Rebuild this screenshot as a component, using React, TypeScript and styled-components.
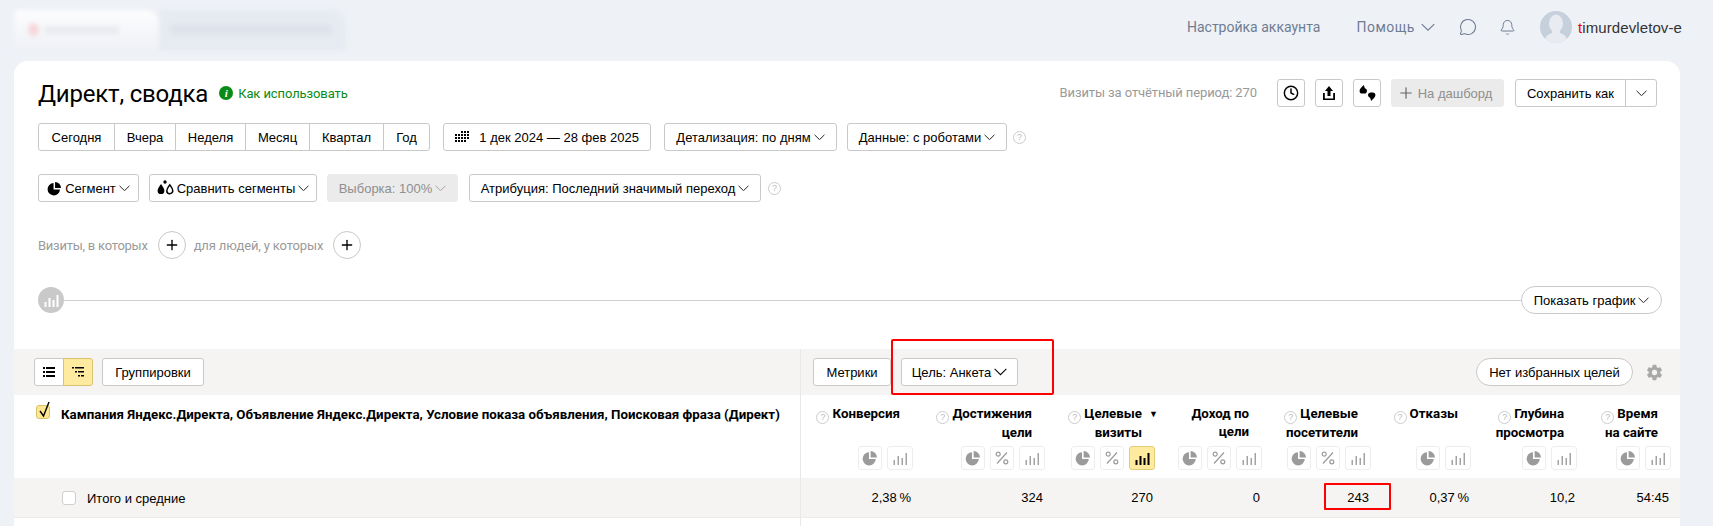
import React from 'react'
import styled, { createGlobalStyle } from 'styled-components'
import { Bell, Clock, MessageCircle, Plus } from 'lucide-react'
import { IoSettingsSharp } from 'react-icons/io5'

const GlobalStyle = createGlobalStyle`
  html, body {
    margin: 0;
    padding: 0;
    background: #eef1f6;
  }
  * {
    box-sizing: border-box;
  }
`

const Page = styled.div`
  width: 1713px;
  height: 526px;
  overflow: hidden;
  background: #eef1f6;
  font-family: 'Liberation Sans', Arial, sans-serif;
  font-size: 13px;
  color: #000;
  display: flex;
  flex-direction: column;
`

const TopBar = styled.header`
  height: 61px;
  flex: none;
  display: flex;
  align-items: center;
  padding: 0 31px 7px 14px;
`

const BlurredBrand = styled.div`
  display: flex;
  width: 331px;
  height: 40px;
  margin-top: 5px;
  filter: blur(2.5px);
`

const BlurredLogo = styled.div`
  width: 145px;
  border-radius: 4px 14px 0 0;
  background: linear-gradient(#fdfdfe, #eff1f6);
  display: flex;
  align-items: center;
  gap: 6px;
  padding-left: 14px;
`

const BlurredDot = styled.span`
  width: 11px;
  height: 13px;
  border-radius: 50%;
  background: #f6d5d7;
`

const BlurredWord = styled.span`
  width: 74px;
  height: 8px;
  background: #e9eaef;
`

const BlurredCrumbs = styled.div`
  flex: 1;
  background: #e6eaf1;
  border-radius: 0 14px 0 0;
  display: flex;
  align-items: center;
  padding-left: 12px;
`

const BlurredLine = styled.span`
  width: 160px;
  height: 9px;
  background: #dce2eb;
`

const NavLinks = styled.nav`
  margin-left: auto;
  display: flex;
  align-items: center;
  color: #6f7d92;
  font-size: 14px;
  font-family: Roboto, sans-serif;
`

const NavLink = styled.span`
  margin-right: 36px;
`

const NavHelp = styled.span`
  display: flex;
  align-items: center;
  gap: 6px;
  margin-right: 24px;
  letter-spacing: 0.5px;
`

const NavIcon = styled.span<{ $gap: number }>`
  display: flex;
  margin-right: ${(p) => p.$gap}px;
`

const Avatar = styled.span`
  width: 32px;
  height: 32px;
  border-radius: 50%;
  overflow: hidden;
  background: #c6cfdc;
  margin-right: 6px;
  display: flex;
`

const UserName = styled.span`
  color: #333;
  font-family: 'Liberation Sans', Arial, sans-serif;
  font-size: 15px;
  letter-spacing: 0.1px;
`

const RedLetter = styled.span`
  color: #e00;
`

const Card = styled.main`
  flex: 1;
  margin: 0 33px 0 14px;
  background: #fff;
  border-radius: 14px 14px 0 0;
  display: flex;
  flex-direction: column;
  min-height: 0;
`

const TitleRow = styled.div`
  display: flex;
  align-items: center;
  height: 28px;
  margin: 18px 23px 0 24px;
`

const Title = styled.h1`
  margin: 0 11px 0 0;
  padding-top: 3px;
  font-family: Roboto, sans-serif;
  font-weight: 400;
  font-size: 24px;
  letter-spacing: -0.2px;
  line-height: 25px;
`

const HowTo = styled.a`
  display: flex;
  align-items: center;
  gap: 5px;
  color: #0a8a16;
  font-family: Roboto, sans-serif;
  font-size: 13px;
  letter-spacing: -0.1px;
`

const InfoDot = styled.span`
  width: 14px;
  height: 14px;
  border-radius: 50%;
  background: #0a8a16;
  color: #fff;
  font: italic bold 11px/14px 'Liberation Serif', serif;
  text-align: center;
`

const VisitsNote = styled.span`
  margin-left: auto;
  margin-right: 20px;
  padding-bottom: 2px;
  color: #999;
  font-family: Roboto, sans-serif;
  font-size: 13px;
  letter-spacing: -0.1px;
`

const ToolRow = styled.div<{ $top: number }>`
  display: flex;
  align-items: center;
  height: 28px;
  margin: ${(p) => p.$top}px 18px 0 24px;
`

const Button = styled.button<{ $w?: number; $gap?: number; $round?: boolean }>`
  height: 28px;
  ${(p) => (p.$w ? `width: ${p.$w}px;` : '')}
  flex: none;
  padding: 0;
  margin-right: ${(p) => p.$gap ?? 0}px;
  display: inline-flex;
  align-items: center;
  justify-content: center;
  gap: 3px;
  background: #fff;
  border: 1px solid #c9c9c9;
  border-radius: ${(p) => (p.$round ? '14px' : '3px')};
  color: #000;
  font: 13px 'Liberation Sans', Arial, sans-serif;
  white-space: nowrap;
`

const DisabledButton = styled(Button)`
  background: #ebebeb;
  border-color: #ebebeb;
  color: #8f8f8f;
`

const DashboardButton = styled(DisabledButton)`
  padding-right: 6px;
`

const GoalsButton = styled(Button)`
  margin-left: auto;
`

const Group = styled.div<{ $gap?: number }>`
  display: flex;
  margin-right: ${(p) => p.$gap ?? 0}px;
`

const GroupItem = styled(Button)<{ $on?: boolean }>`
  border-radius: 0;
  margin-left: -1px;
  background: ${(p) => (p.$on ? '#ffeba0' : '#fff')};
  border-color: ${(p) => (p.$on ? '#d9c26e' : '#c9c9c9')};
  &:first-child {
    margin-left: 0;
    border-radius: 3px 0 0 3px;
  }
  &:last-child {
    border-radius: 0 3px 3px 0;
  }
`

const HelpMark = styled.span`
  width: 13px;
  height: 13px;
  flex: none;
  border: 1px solid #ccc;
  border-radius: 50%;
  color: #bbb;
  font: 9px/11px 'Liberation Sans', sans-serif;
  text-align: center;
  display: inline-block;
`

const FilterLabel = styled.span<{ $spacing: number }>`
  color: #9a9a9a;
  font-family: Roboto, sans-serif;
  font-size: 13px;
  letter-spacing: ${(p) => p.$spacing}px;
  margin-right: 10px;
`

const AddCircle = styled.button`
  width: 28px;
  height: 28px;
  flex: none;
  padding: 0;
  margin-right: 8px;
  border: 1px solid #c9c9c9;
  border-radius: 50%;
  background: #fff;
  display: flex;
  align-items: center;
  justify-content: center;
`

const ChartRow = styled.div`
  display: flex;
  align-items: center;
  height: 28px;
  margin: 27px 18px 0 24px;
`

const ChartBadge = styled.span`
  width: 26px;
  height: 26px;
  border-radius: 50%;
  background: #c9c9c9;
  flex: none;
  display: flex;
  align-items: center;
  justify-content: center;
`

const ChartLine = styled.span`
  flex: 1;
  height: 1px;
  background: #cfcfcf;
`

const Table = styled.section`
  flex: 1;
  margin-top: 35px;
  display: flex;
  flex-direction: column;
  min-height: 0;
`

const TableRow = styled.div<{ $shade?: boolean; $h?: number }>`
  display: grid;
  grid-template-columns: 786px 1fr;
  background: ${(p) => (p.$shade ? '#f5f4f2' : '#fff')};
  ${(p) => (p.$h ? `height: ${p.$h}px; flex: none;` : 'flex: 1;')}
`

const TotalRow = styled(TableRow)`
  border-bottom: 1px solid #ebebeb;
`

const LeftCell = styled.div`
  display: flex;
  align-items: center;
`

const ToolbarLeft = styled(LeftCell)`
  padding-left: 20px;
`

const HeadLeft = styled(LeftCell)`
  align-items: flex-start;
  padding: 10px 0 0 22px;
`

const TotalLeft = styled(LeftCell)`
  padding: 1px 0 0 48px;
`

const RightCell = styled.div`
  border-left: 1px solid #e8e8e8;
  position: relative;
`

const ToolbarRight = styled(RightCell)`
  display: flex;
  align-items: center;
  padding: 0 17px 0 12px;
`

const GoalHighlight = styled.span`
  position: absolute;
  left: 90px;
  top: -10px;
  width: 163px;
  height: 56px;
  border: 2px solid #f00;
  border-radius: 2px;
  pointer-events: none;
`

const Settings = styled.span`
  display: flex;
  color: #a8a8a8;
  margin-left: 13px;
`

const MetricGrid = styled(RightCell)`
  display: grid;
  grid-template-columns: 112px 132px 110px 107px 109px 100px 106px 94px;
`

const Check = styled.span<{ $on?: boolean }>`
  width: 14px;
  height: 14px;
  flex: none;
  position: relative;
  border: 1px solid ${(p) => (p.$on ? '#d9c26e' : '#cfcfcf')};
  border-radius: 3px;
  background: ${(p) => (p.$on ? '#ffe78f' : '#fff')};
`

const CheckMark = styled.svg`
  position: absolute;
  left: 0;
  top: -6px;
`

const DimensionTitle = styled.span`
  margin: 1px 0 0 11px;
  font-family: Roboto, sans-serif;
  font-weight: 700;
  font-size: 13.3px;
  line-height: 17px;
  white-space: nowrap;
`

const TotalLabel = styled.span`
  margin-left: 11px;
`

const MetricHead = styled.div`
  display: flex;
  flex-direction: column;
  align-items: flex-end;
`

const MetricTitle = styled.div`
  height: 51px;
  padding: 10px 13px 0 0;
  position: relative;
  font-family: Roboto, sans-serif;
  font-weight: 700;
  font-size: 13.3px;
  line-height: 18px;
  text-align: right;
  white-space: nowrap;
  ${HelpMark} {
    margin-right: 3px;
    vertical-align: -2px;
    font-weight: 400;
  }
`

const SortArrow = styled.span`
  position: absolute;
  right: -3px;
  top: 10px;
  font-size: 9px;
  font-weight: 400;
`

const ChartButtons = styled.div`
  display: flex;
  gap: 5px;
`

const ChartButton = styled.span<{ $on?: boolean; $wide?: boolean }>`
  height: 24px;
  width: ${(p) => (p.$wide ? 26 : 24)}px;
  display: flex;
  align-items: center;
  justify-content: center;
  border: 1px solid ${(p) => (p.$on ? '#e3cc78' : '#ededed')};
  border-radius: 3px;
  background: ${(p) => (p.$on ? '#ffeba0' : '#fff')};
`

const ValueCell = styled.div`
  display: flex;
  align-items: center;
  justify-content: flex-end;
  padding-right: 2px;
`

const Value = styled.span<{ $marked?: boolean }>`
  position: relative;
  font-size: 13px;
  ${(p) =>
    p.$marked
      ? `&::after {
          content: '';
          position: absolute;
          left: -23px;
          right: -22px;
          top: -7px;
          bottom: -5px;
          border: 2px solid #f00;
          border-radius: 1px;
        }`
      : ''}
`

const Chevron = ({ w = 11, color = '#000' }: { w?: number; color?: string }) => (
  <svg width={w} height={w * 0.6} viewBox="0 0 12 7" fill="none" stroke={color} strokeWidth="0.95">
    <path d="M.6.8 6 6.100 11.400.8" />
  </svg>
)

const PieIcon = ({ color = '#9b9b9b', size = 16 }: { color?: string; size?: number }) => (
  <svg width={size} height={size} viewBox="0 0 16 16">
    <path d="M7 2.200A6.600 6.600 0 1 0 13.800 9H7z" fill={color} />
    <path d="M8.600 1a6.600 6.600 0 0 1 6.400 6.400H8.600z" fill={color} />
  </svg>
)

const BarsIcon = ({ color = '#a3a3a3', wide = false }: { color?: string; wide?: boolean }) => (
  <svg width="15" height="13" viewBox="0 0 15 13">
    <rect x="0.5" y="8" width={wide ? 2 : 1.5} height="5" fill={color} />
    <rect x="4.5" y="4" width={wide ? 2 : 1.5} height="9" fill={color} />
    <rect x="8.5" y="6" width={wide ? 2 : 1.5} height="7" fill={color} />
    <rect x="12.5" y="1" width={wide ? 2 : 1.5} height="12" fill={color} />
  </svg>
)

const PercentIcon = () => (
  <svg width="14" height="14" viewBox="0 0 14 14" fill="none" stroke="#9b9b9b" strokeWidth="1.2">
    <circle cx="3.200" cy="3.200" r="2" />
    <circle cx="10.800" cy="10.800" r="2" />
    <path d="M12 1.500 2 12.500" />
  </svg>
)

const CalendarIcon = () => (
  <svg width="14" height="13" viewBox="0 0 14 13" fill="#000">
    {[0, 3, 6, 9].map((y) =>
      [0, 3, 6, 9, 12].map((x) =>
        (y === 0 && x < 6) || (y === 9 && x > 9) ? null : (
          <rect key={`${x}-${y}`} x={x} y={y} width="2" height="2" />
        )
      )
    )}
  </svg>
)

const DropsIcon = () => (
  <svg width="17" height="16" viewBox="0 0 17 16">
    <circle cx="8" cy="2" r="1.700" fill="#000" />
    <path d="M4 4c2 3 3.400 4.700 3.400 6.700a3.400 3.400 0 0 1-6.800 0C.6 8.700 2 7 4 4z" fill="#000" />
    <path d="M12.800 4.800c1.700 2.500 3 4 3 5.900a3 3 0 0 1-6 0c0-1.900 1.300-3.400 3-5.900z" fill="#fff" stroke="#000" strokeWidth="1.500" />
  </svg>
)

const UploadIcon = () => (
  <svg width="14" height="16" viewBox="0 0 14 16" fill="#000">
    <path d="M7 1 11 6H8.500v5h-3V6H3z" />
    <path d="M1 8h1.800v5.400h8.400V8H13v7H1z" />
  </svg>
)

const blob = 'M4.500 1 5.500 4C7 4.300 7.500 5.500 7.500 6.500 7.500 8 6.300 9 5 9H3C1.500 9 .5 8 .5 6.500.5 4.500 2.500 3 4.500 1z'

const QuoteIcon = () => (
  <svg width="17" height="18" viewBox="0 0 16 17" fill="#000">
    <path d={blob} />
    <path d={blob} transform="rotate(180 8 8.500)" />
  </svg>
)

const ListIcon = () => (
  <svg width="12" height="10" viewBox="0 0 12 10" fill="#000">
    {[0, 4, 8].map((y) => (
      <React.Fragment key={y}>
        <rect x="0" y={y} width="2" height="2" />
        <rect x="3" y={y} width="9" height="2" />
      </React.Fragment>
    ))}
  </svg>
)

const TreeIcon = () => (
  <svg width="12" height="10" viewBox="0 0 12 10" fill="#000">
    <rect x="0" y="0" width="2" height="1.500" />
    <rect x="3" y="0" width="9" height="1.500" />
    <rect x="3" y="4" width="2" height="1.500" />
    <rect x="6" y="4" width="6" height="1.500" />
    <rect x="6" y="8" width="2" height="1.500" />
    <rect x="9" y="8" width="3" height="1.500" />
  </svg>
)

const Silhouette = () => (
  <svg width="32" height="32" viewBox="0 0 32 32">
    <ellipse cx="16" cy="12.500" rx="7" ry="9" fill="#e8ecf2" />
    <path d="M12 19h8v3c4 1.500 7 3 8 10H4c1-7 4-8.500 8-10z" fill="#e8ecf2" />
  </svg>
)

type Metric = {
  title: React.ReactNode
  help: boolean
  percent: boolean
  value: string
  sorted?: boolean
  marked?: boolean
}

const metrics: Metric[] = [
  { title: 'Конверсия', help: true, percent: false, value: '2,38\u202f%' },
  { title: <>Достижения<br />цели</>, help: true, percent: true, value: '324' },
  { title: <>Целевые<br />визиты</>, help: true, percent: true, value: '270', sorted: true },
  { title: <>Доход по<br />цели</>, help: false, percent: true, value: '0' },
  { title: <>Целевые<br />посетители</>, help: true, percent: true, value: '243', marked: true },
  { title: 'Отказы', help: true, percent: false, value: '0,37\u202f%' },
  { title: <>Глубина<br />просмотра</>, help: true, percent: false, value: '10,2' },
  { title: <>Время<br />на сайте</>, help: true, percent: false, value: '54:45' },
]

const periods: [string, number][] = [
  ['Сегодня', 77],
  ['Вчера', 62],
  ['Неделя', 71],
  ['Месяц', 65],
  ['Квартал', 75],
  ['Год', 47],
]

const App = () => {
  return (
    <Page>
      <GlobalStyle />
      <TopBar>
        <BlurredBrand>
          <BlurredLogo>
            <BlurredDot />
            <BlurredWord />
          </BlurredLogo>
          <BlurredCrumbs>
            <BlurredLine />
          </BlurredCrumbs>
        </BlurredBrand>
        <NavLinks>
          <NavLink>Настройка аккаунта</NavLink>
          <NavHelp>
            Помощь
            <Chevron w={14} color="#6f7d92" />
          </NavHelp>
          <NavIcon $gap={22}>
            <MessageCircle size={18} strokeWidth={1.4} />
          </NavIcon>
          <NavIcon $gap={24}>
            <Bell size={17} strokeWidth={1.4} />
          </NavIcon>
          <Avatar>
            <Silhouette />
          </Avatar>
          <UserName>
            <RedLetter>t</RedLetter>imurdevletov-e
          </UserName>
        </NavLinks>
      </TopBar>

      <Card>
        <TitleRow>
          <Title>Директ, сводка</Title>
          <HowTo>
            <InfoDot>i</InfoDot>
            Как использовать
          </HowTo>
          <VisitsNote>Визиты за отчётный период: 270</VisitsNote>
          <Button $w={28} $gap={10}>
            <Clock size={16} strokeWidth={2.2} />
          </Button>
          <Button $w={28} $gap={10}>
            <UploadIcon />
          </Button>
          <Button $w={28} $gap={10}>
            <QuoteIcon />
          </Button>
          <DashboardButton $w={113} $gap={11}>
            <Plus size={18} strokeWidth={1.6} color="#666" />
            На дашборд
          </DashboardButton>
          <Group>
            <GroupItem $w={111}>Сохранить как</GroupItem>
            <GroupItem $w={32}>
              <Chevron />
            </GroupItem>
          </Group>
        </TitleRow>

        <ToolRow $top={16}>
          <Group $gap={13}>
            {periods.map(([label, width]) => (
              <GroupItem key={label} $w={width}>
                {label}
              </GroupItem>
            ))}
          </Group>
          <Button $w={208} $gap={13}>
            <CalendarIcon />
            &nbsp;&nbsp;1 дек 2024 — 28 фев 2025
          </Button>
          <Button $w={173} $gap={10}>
            Детализация: по дням
            <Chevron />
          </Button>
          <Button $w={160} $gap={6}>
            Данные: с роботами
            <Chevron />
          </Button>
          <HelpMark>?</HelpMark>
        </ToolRow>

        <ToolRow $top={23}>
          <Button $w={101} $gap={10}>
            <PieIcon color="#000" size={15} />
            Сегмент
            <Chevron />
          </Button>
          <Button $w={168} $gap={10}>
            <DropsIcon />
            Сравнить сегменты
            <Chevron />
          </Button>
          <DisabledButton $w={131} $gap={11}>
            Выборка: 100%
            <Chevron color="#999" />
          </DisabledButton>
          <Button $w={292} $gap={7}>
            Атрибуция: Последний значимый переход
            <Chevron />
          </Button>
          <HelpMark>?</HelpMark>
        </ToolRow>

        <ToolRow $top={29}>
          <FilterLabel $spacing={-0.25}>Визиты, в которых</FilterLabel>
          <AddCircle>
            <Plus size={16} strokeWidth={2} />
          </AddCircle>
          <FilterLabel $spacing={-0.15}>для людей, у которых</FilterLabel>
          <AddCircle>
            <Plus size={16} strokeWidth={2} />
          </AddCircle>
        </ToolRow>

        <ChartRow>
          <ChartBadge>
            <BarsIcon color="#fff" wide />
          </ChartBadge>
          <ChartLine />
          <Button $w={141} $round>
            Показать график
            <Chevron />
          </Button>
        </ChartRow>

        <Table>
          <TableRow $shade $h={46}>
            <ToolbarLeft>
              <Group $gap={9}>
                <GroupItem $w={30}>
                  <ListIcon />
                </GroupItem>
                <GroupItem $w={30} $on>
                  <TreeIcon />
                </GroupItem>
              </Group>
              <Button $w={102}>Группировки</Button>
            </ToolbarLeft>
            <ToolbarRight>
              <Button $w={78} $gap={10}>
                Метрики
              </Button>
              <Button $w={117}>
                Цель: Анкета
                <Chevron w={13} />
              </Button>
              <GoalHighlight />
              <GoalsButton $w={157} $round>
                Нет избранных целей
              </GoalsButton>
              <Settings>
                <IoSettingsSharp size={17} />
              </Settings>
            </ToolbarRight>
          </TableRow>

          <TableRow $h={83}>
            <HeadLeft>
              <Check $on>
                <CheckMark width="16" height="20" viewBox="0 0 16 20" fill="none" stroke="#000" strokeWidth="1.4">
                  <path d="M3 11l3.500 5L12 2" />
                </CheckMark>
              </Check>
              <DimensionTitle>
                Кампания Яндекс.Директа, Объявление Яндекс.Директа, Условие показа объявления, Поисковая фраза (Директ)
              </DimensionTitle>
            </HeadLeft>
            <MetricGrid>
              {metrics.map((m, i) => (
                <MetricHead key={i}>
                  <MetricTitle>
                    {m.help && <HelpMark>?</HelpMark>}
                    {m.title}
                    {m.sorted && <SortArrow>▼</SortArrow>}
                  </MetricTitle>
                  <ChartButtons>
                    <ChartButton>
                      <PieIcon />
                    </ChartButton>
                    {m.percent && (
                      <ChartButton>
                        <PercentIcon />
                      </ChartButton>
                    )}
                    <ChartButton $on={m.sorted} $wide>
                      <BarsIcon color={m.sorted ? '#000' : undefined} wide={m.sorted} />
                    </ChartButton>
                  </ChartButtons>
                </MetricHead>
              ))}
            </MetricGrid>
          </TableRow>

          <TotalRow $shade $h={40}>
            <TotalLeft>
              <Check />
              <TotalLabel>Итого и средние</TotalLabel>
            </TotalLeft>
            <MetricGrid>
              {metrics.map((m, i) => (
                <ValueCell key={i}>
                  <Value $marked={m.marked}>{m.value}</Value>
                </ValueCell>
              ))}
            </MetricGrid>
          </TotalRow>

          <TableRow>
            <LeftCell />
            <RightCell />
          </TableRow>
        </Table>
      </Card>
    </Page>
  )
}

export default App
